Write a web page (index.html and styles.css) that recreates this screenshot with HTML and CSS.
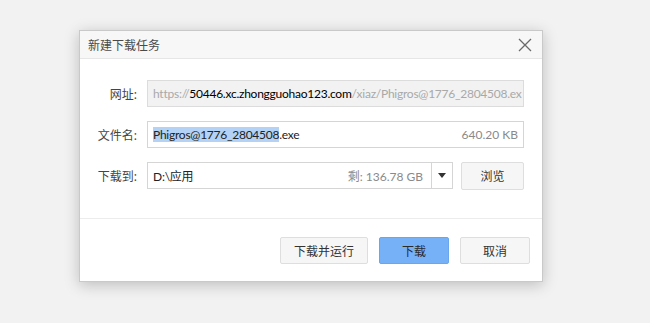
FILE: index.html
```html
<!DOCTYPE html>
<html lang="zh-CN">
<head>
<meta charset="utf-8">
<title>新建下载任务</title>
<link rel="stylesheet" href="styles.css">
</head>
<body>
<div class="dialog">
  <div class="titlebar">
    <span class="title">新建下载任务</span>
    <svg class="close" width="14" height="14" viewBox="0 0 14 14"><path d="M1 1L13 13M13 1L1 13" stroke="#6a6a6a" stroke-width="1.3" fill="none"/></svg>
  </div>
  <div class="body">
    <div class="row">
      <span class="label">网址:</span>
      <div class="field readonly"><span class="url"><span class="dim">https://</span>50446.xc.zhongguohao123.com<span class="dim">/xiaz/Phigros@1776_2804508.ex</span></span></div>
    </div>
    <div class="row">
      <span class="label">文件名:</span>
      <div class="field"><span class="name"><span class="sel">Phigros@1776_2804508</span>.exe</span><span class="meta">640.20 KB</span></div>
    </div>
    <div class="row">
      <span class="label">下载到:</span>
      <div class="combo">
        <div class="field path"><span class="name">D:\应用</span><span class="meta">剩: 136.78 GB</span></div>
        <div class="drop"><svg width="8" height="5" viewBox="0 0 8 5"><path d="M0 0H8L4 5Z" fill="#333"/></svg></div>
      </div>
      <button class="btn browse">浏览</button>
    </div>
  </div>
  <div class="footer">
    <button class="btn wide">下载并运行</button>
    <button class="btn primary">下载</button>
    <button class="btn">取消</button>
  </div>
</div>
</body>
</html>
```
FILE: styles.css
```css
* { box-sizing: border-box; }
html, body { margin: 0; padding: 0; }
body {
  width: 650px;
  height: 323px;
  background: #f2f2f2;
  font-family: "Noto Sans", "Noto Sans CJK SC", sans-serif;
  font-size: 12px;
  color: #333;
  overflow: hidden;
  padding: 30px 0 0 79px;
}
.dialog {
  width: 464px;
  height: 252px;
  background: #fff;
  border: 1px solid #c9c9c9;
  box-shadow: 0 3px 14px rgba(0,0,0,0.22);
  display: flex;
  flex-direction: column;
}
.titlebar {
  height: 28px;
  flex: none;
  background: #f7f7f7;
  border-bottom: 1px solid #e6e6e6;
  display: flex;
  align-items: center;
  justify-content: space-between;
  padding: 0 10px 0 8px;
}
.title { font-size: 12px; color: #4a4a4a; }
.close { display: block; }
.body {
  padding: 21px 18px 0 0;
  display: flex;
  flex-direction: column;
  gap: 14px;
  height: 160px;
  border-bottom: 1px solid #ececec;
}
.row {
  display: flex;
  align-items: center;
  height: 27px;
}
.label {
  width: 57px;
  text-align: right;
  margin-right: 10px;
  color: #444;
  flex: none;
}
.field {
  flex: 1;
  min-width: 0;
  height: 27px;
  border: 1px solid #d5d5d5;
  background: #fff;
  display: flex;
  align-items: center;
  justify-content: space-between;
  padding: 0 5px;
  white-space: nowrap;
  overflow: hidden;
  font-family: "Lato", "Noto Sans CJK SC", sans-serif;
  font-size: 12px;
  letter-spacing: -0.25px;
  color: #222;
}
.readonly { background: #f2f2f2; border-color: #dcdcdc; }
.url { color: #000; }
.dim { color: #a9a9a9; }
.sel { background: #b4d2f5; }
.meta { color: #8a8a8a; letter-spacing: 0; }
.combo { flex: 1; display: flex; height: 27px; }
.path { border-right: none; padding-right: 8px; }
.drop {
  width: 22px;
  height: 27px;
  border: 1px solid #d5d5d5;
  display: flex;
  align-items: center;
  justify-content: center;
  flex: none;
}
.btn {
  font-family: "Noto Sans CJK SC", "Noto Sans", sans-serif;
  font-size: 12px;
  color: #333;
  width: 70px;
  height: 27px;
  background: #f6f6f6;
  border: 1px solid #dedede;
  border-radius: 2px;
  padding: 0;
  flex: none;
}
.browse { width: 63px; margin-left: 8px; height: 28px; }
.footer {
  flex: 1;
  display: flex;
  justify-content: flex-end;
  align-items: flex-start;
  gap: 11px;
  padding: 18px 12px 0 0;
}
.wide { width: 88px; }
.primary { background: #76b1f8; border-color: #6aa6ee; color: #2a2a2a; }
```
